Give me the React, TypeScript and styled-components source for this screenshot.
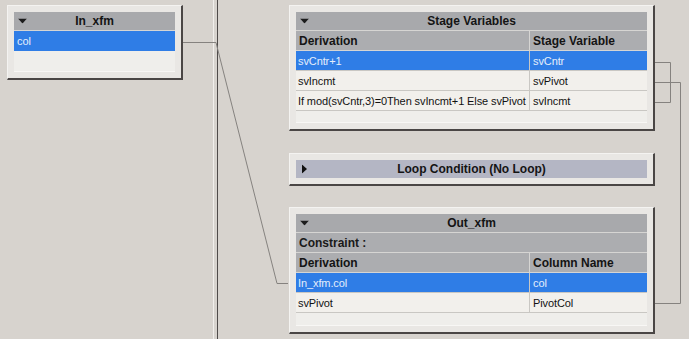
import React from 'react';
import styled, { createGlobalStyle } from 'styled-components';

const GlobalStyle = createGlobalStyle`
    html, body {
        margin: 0;
        padding: 0;
        background: #d7d3ce;
        font-family: "Liberation Sans", Arial, sans-serif;
        font-size: 12px;
        overflow: hidden;
    }
`;

interface WidthProps {
    widthProp: number;
}

interface RowProps {
    isSelected?: boolean;
    heightProp?: number;
}

interface BarProps {
    tone?: 'title' | 'column' | 'loop';
}

const Canvas = styled.div`
    position: relative;
    width: 689px;
    height: 339px;
    display: flex;
    background: #d7d3ce;
`;

const LeftColumn = styled.div`
    width: 206px;
    padding: 5px 0 0 7px;
`;

const Divider = styled.div`
    width: 3px;
    height: 339px;
    border-left: 1px solid #f1efec;
    border-right: 1px solid #4f4b4a;
`;

const RightColumn = styled.div`
    padding: 5px 0 0 71px;
    display: flex;
    flex-direction: column;
    gap: 22px;
`;

const PanelFrame = styled.div<WidthProps>`
    width: ${(props) => props.widthProp}px;
    box-sizing: border-box;
    background: #e9e7e4;
    border-top: 1px solid #f4f3f1;
    border-left: 1px solid #f4f3f1;
    border-right: 2px solid #4a4645;
    border-bottom: 2px solid #4a4645;
    padding: 6px;
`;

const PanelBody = styled.div`
    background: #efedea;
    display: flex;
    flex-direction: column;
`;

const Bar = styled.div<BarProps>`
    position: relative;
    box-sizing: border-box;
    height: ${(props) => (props.tone === 'loop' ? 18 : props.tone === 'title' ? 19 : 20)}px;
    background: ${(props) =>
        props.tone === 'loop' ? '#b4b6c4' : props.tone === 'title' ? '#a8a9ac' : '#acadb0'};
    border-bottom: ${(props) => (props.tone === 'loop' ? 'none' : '1px solid #d6d5d3')};
    display: flex;
    align-items: center;
    justify-content: center;
    font-weight: bold;
    color: #141414;
`;

const LeftBarText = styled.div`
    padding-left: 3px;
    font-weight: bold;
    color: #1a1a1a;
    width: 100%;
`;

const Arrow = styled.svg`
    position: absolute;
    left: 4px;
    top: 50%;
    transform: translateY(-50%);
`;

const HeaderGrid = styled.div`
    box-sizing: border-box;
    height: 20px;
    display: grid;
    grid-template-columns: 233px 1fr;
    background: #acadb0;
    border-bottom: 1px solid #d6d5d3;
    font-weight: bold;
    color: #141414;
`;

const HeaderCell = styled.div`
    display: flex;
    align-items: center;
    padding-left: 3px;
    & + & {
        border-left: 1px solid #d6d5d3;
    }
`;

const Row = styled.div<RowProps>`
    box-sizing: border-box;
    height: ${(props) => props.heightProp ?? 20}px;
    display: grid;
    grid-template-columns: 233px 1fr;
    font-size: 11px;
    letter-spacing: -0.1px;
    background: ${(props) => (props.isSelected ? '#2f7de6' : '#f2f0ec')};
    color: ${(props) => (props.isSelected ? '#e4eefb' : '#121212')};
    border-bottom: 1px solid #c9c7c3;
`;

const SingleRow = styled.div<RowProps>`
    box-sizing: border-box;
    height: ${(props) => props.heightProp ?? 20}px;
    display: flex;
    align-items: center;
    padding-left: 3px;
    font-size: 11px;
    background: ${(props) => (props.isSelected ? '#2f7de6' : '#f2f0ec')};
    color: ${(props) => (props.isSelected ? '#e4eefb' : '#121212')};
    border-bottom: ${(props) => (props.isSelected ? 'none' : '1px solid #c9c7c3')};
`;

const Cell = styled.div`
    display: flex;
    align-items: center;
    padding-left: 2px;
    white-space: nowrap;
    overflow: hidden;
    & + & {
        border-left: 1px solid #c9c7c3;
        padding-left: 3px;
    }
`;

const EmptyRow = styled.div<RowProps>`
    height: ${(props) => props.heightProp ?? 11}px;
    background: #efeeeb;
    border-bottom: 1px solid #f8f7f5;
`;

const Links = styled.svg`
    position: absolute;
    left: 0;
    top: 0;
    pointer-events: none;
`;

function DownArrow() {
    return (
        <Arrow width="9" height="5" viewBox="0 0 9 5">
            <polygon points="0,0 9,0 4.5,5" fill="#1c1c1c" />
        </Arrow>
    );
}

function RightArrow() {
    return (
        <Arrow width="5" height="9" viewBox="0 0 5 9" style={{ left: 6 }}>
            <polygon points="0,0 5,4.5 0,9" fill="#111" />
        </Arrow>
    );
}

const stageVariables = [
    { derivation: 'svCntr+1', name: 'svCntr', selected: true },
    { derivation: 'svIncmt', name: 'svPivot' },
    { derivation: 'If mod(svCntr,3)=0Then svIncmt+1 Else svPivot', name: 'svIncmt' },
];

const outColumns = [
    { derivation: 'In_xfm.col', name: 'col', selected: true },
    { derivation: 'svPivot', name: 'PivotCol' },
];

export default function App() {
    return (
        <>
            <GlobalStyle />
            <Canvas>
                <LeftColumn>
                    <PanelFrame widthProp={176}>
                        <PanelBody>
                            <Bar tone="title">
                                <DownArrow />
                                In_xfm
                            </Bar>
                            <SingleRow isSelected>col</SingleRow>
                            <EmptyRow heightProp={20} />
                        </PanelBody>
                    </PanelFrame>
                </LeftColumn>
                <Divider />
                <RightColumn>
                    <PanelFrame widthProp={366}>
                        <PanelBody>
                            <Bar tone="title">
                                <DownArrow />
                                Stage Variables
                            </Bar>
                            <HeaderGrid>
                                <HeaderCell>Derivation</HeaderCell>
                                <HeaderCell>Stage Variable</HeaderCell>
                            </HeaderGrid>
                            {stageVariables.map((v) => (
                                <Row key={`sv_${v.name}`} isSelected={v.selected}>
                                    <Cell>{v.derivation}</Cell>
                                    <Cell>{v.name}</Cell>
                                </Row>
                            ))}
                            <EmptyRow />
                        </PanelBody>
                    </PanelFrame>
                    <PanelFrame widthProp={366}>
                        <PanelBody>
                            <Bar tone="loop">
                                <RightArrow />
                                Loop Condition (No Loop)
                            </Bar>
                        </PanelBody>
                    </PanelFrame>
                    <PanelFrame widthProp={366} style={{ marginTop: -1 }}>
                        <PanelBody>
                            <Bar tone="title">
                                <DownArrow />
                                Out_xfm
                            </Bar>
                            <Bar>
                                <LeftBarText>Constraint :</LeftBarText>
                            </Bar>
                            <HeaderGrid>
                                <HeaderCell>Derivation</HeaderCell>
                                <HeaderCell>Column Name</HeaderCell>
                            </HeaderGrid>
                            {outColumns.map((c) => (
                                <Row key={`out_${c.name}`} isSelected={c.selected}>
                                    <Cell>{c.derivation}</Cell>
                                    <Cell>{c.name}</Cell>
                                </Row>
                            ))}
                            <EmptyRow heightProp={12} />
                        </PanelBody>
                    </PanelFrame>
                </RightColumn>
                <Links width="689" height="339" viewBox="0 0 689 339">
                    <g fill="none" stroke="#85827f" strokeWidth="1">
                        <polyline points="183,42.5 216,42.5 277,283.5 288,283.5" />
                        <polyline points="655,62.5 670.5,62.5 670.5,102.5 655,102.5" />
                        <polyline points="655,82.5 680.5,82.5 680.5,303.5 655,303.5" />
                    </g>
                </Links>
            </Canvas>
        </>
    );
}
